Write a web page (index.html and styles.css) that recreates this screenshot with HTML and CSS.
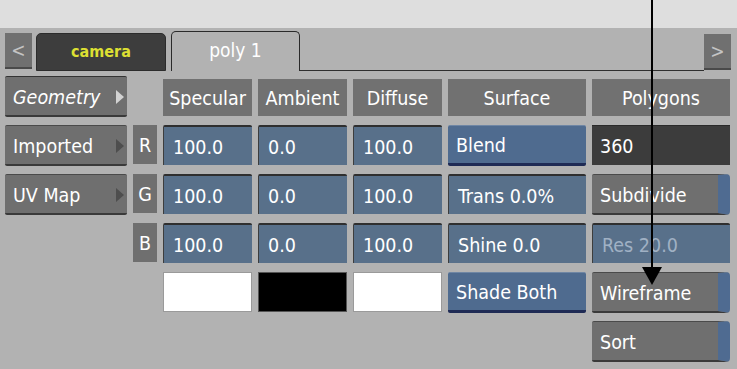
FILE: index.html
```html
<!DOCTYPE html>
<html>
<head>
<meta charset="utf-8">
<link rel="stylesheet" href="styles.css">
</head>
<body>
<div class="topband"></div>
<div class="tabbar">
  <div class="nav">&lt;</div>
  <div class="tab tab-camera">camera</div>
  <div class="tab tab-active">poly 1</div>
  <div class="tabfill"></div>
  <div class="nav nav-right">&gt;</div>
</div>
<div class="grid">
  <div class="btn btn-grey btn-active"><span class="italic">Geometry</span><span class="tri tri-light"></span></div>
  <div class="blank"></div>
  <div class="head">Specular</div>
  <div class="head">Ambient</div>
  <div class="head">Diffuse</div>
  <div class="head">Surface</div>
  <div class="head">Polygons</div>

  <div class="btn btn-grey"><span>Imported</span><span class="tri"></span></div>
  <div class="lbl">R</div>
  <div class="val">100.0</div>
  <div class="val">0.0</div>
  <div class="val">100.0</div>
  <div class="btn btn-blue">Blend</div>
  <div class="field-dark">360</div>

  <div class="btn btn-grey"><span>UV Map</span><span class="tri"></span></div>
  <div class="lbl">G</div>
  <div class="val">100.0</div>
  <div class="val">0.0</div>
  <div class="val">100.0</div>
  <div class="val">Trans 0.0%</div>
  <div class="btn btn-grey btn-toggle">Subdivide</div>

  <div class="blank"></div>
  <div class="lbl">B</div>
  <div class="val">100.0</div>
  <div class="val">0.0</div>
  <div class="val">100.0</div>
  <div class="val">Shine 0.0</div>
  <div class="val val-dim">Res 20.0</div>

  <div class="blank"></div>
  <div class="blank"></div>
  <div class="swatch swatch-white"></div>
  <div class="swatch swatch-black"></div>
  <div class="swatch swatch-white"></div>
  <div class="btn btn-blue">Shade Both</div>
  <div class="btn btn-grey btn-toggle">Wireframe</div>

  <div class="blank"></div>
  <div class="blank"></div>
  <div class="blank"></div>
  <div class="blank"></div>
  <div class="blank"></div>
  <div class="blank"></div>
  <div class="btn btn-grey btn-toggle">Sort</div>
</div>
<div class="arrow"><div class="shaft"></div><div class="arrowhead"></div></div>
</body>
</html>
```

FILE: styles.css
```css
html, body {
  margin: 0;
  padding: 0;
}
body {
  width: 737px;
  height: 369px;
  overflow: hidden;
  background: #b2b2b2;
  font-family: "DejaVu Sans Condensed", "DejaVu Sans", sans-serif;
  font-stretch: semi-condensed;
  font-size: 19.5px;
  color: #ffffff;
  position: relative;
}
.topband {
  height: 28px;
  background: #dedede;
}
.tabbar {
  height: 43px;
  display: flex;
  align-items: flex-end;
  padding-left: 5px;
  padding-right: 6px;
  box-sizing: border-box;
}
.nav {
  width: 27px;
  height: 36px;
  margin-bottom: 2px;
  background: #707070;
  color: #c4c4c4;
  box-sizing: border-box;
  border-bottom: 2px solid #4a4a4a;
  display: flex;
  align-items: center;
  justify-content: center;
  font-size: 19px;
}
.tab {
  box-sizing: border-box;
  display: flex;
  align-items: center;
  justify-content: center;
  border-radius: 5px 5px 0 0;
}
.tab-camera {
  margin-left: 4px;
  width: 130px;
  height: 38px;
  background: #3d3d3d;
  border: 1px solid #2c2c2c;
  color: #dde033;
  font-weight: bold;
  font-size: 16px;
  padding-bottom: 2px;
}
.tab-active {
  margin-left: 5px;
  width: 129px;
  height: 40px;
  background: #b2b2b2;
  border: 1px solid #2a2a2a;
  border-bottom: none;
  color: #ffffff;
  font-size: 19px;
  padding-bottom: 4px;
}
.tabfill {
  flex: 1;
  height: 1px;
  background: #2f2f2f;
}
.nav-right {
  margin-bottom: 1px;
}
.grid {
  display: grid;
  grid-template-columns: 122px 24px 89px 89px 89px 138px 138px;
  grid-auto-rows: 41px;
  column-gap: 6px;
  row-gap: 8px;
  padding: 5px 0 0 5px;
}
.btn {
  box-sizing: border-box;
  display: flex;
  align-items: center;
  padding-left: 8px;
  padding-top: 2px;
  border-radius: 2px;
}
.btn-grey {
  background: #6f6f6f;
  border-top: 1px solid #4a4a4a;
  border-bottom: 2px solid #3a3a3a;
}
.btn-active {
  border-top: 1px solid #333333;
}
.btn-grey .tri {
  margin-left: auto;
  margin-right: 3px;
  width: 0;
  height: 0;
  border-top: 7px solid transparent;
  border-bottom: 7px solid transparent;
  border-left: 8px solid #4e4e4e;
}
.btn-grey .tri-light {
  border-left-color: #d2d2d2;
}
.italic {
  font-style: italic;
}
.btn-blue {
  background: #4f6b8f;
  border-top: 1px solid #6f86a4;
  border-bottom: 3px solid #1f2b55;
}
.btn-toggle {
  border-right: 12px solid #4f6b91;
  border-radius: 2px 4px 4px 2px;
}
.head {
  box-sizing: border-box;
  margin: 3px 0 1px 0;
  padding-top: 1px;
  background: #717171;
  display: flex;
  align-items: center;
  justify-content: center;
}
.lbl {
  background: #6f6f6f;
  display: flex;
  align-items: center;
  justify-content: center;
  margin-bottom: 2px;
  padding-top: 1px;
}
.val {
  box-sizing: border-box;
  background: #58708a;
  border-top: 2px solid #2f2f2f;
  border-left: 1px solid #3d3d3d;
  display: flex;
  align-items: center;
  padding-left: 9px;
  padding-top: 2px;
  margin-bottom: 1px;
  border-radius: 2px 2px 0 0;
}
.val-dim {
  color: #a0b1c4;
}
.field-dark {
  box-sizing: border-box;
  background: #3c3c3c;
  border-top: 1px solid #2a2a2a;
  display: flex;
  align-items: center;
  padding-left: 8px;
  padding-top: 2px;
  margin-bottom: 1px;
}
.swatch {
  box-sizing: border-box;
  border: 1px solid #9a9a9a;
  margin-bottom: 1px;
}
.swatch-white {
  background: #ffffff;
}
.swatch-black {
  background: #000000;
  border-color: #555555;
}
.arrow {
  position: absolute;
  left: 642px;
  top: 0;
  width: 20px;
  display: flex;
  flex-direction: column;
  align-items: center;
}
.shaft {
  width: 2px;
  height: 267px;
  background: #000000;
}
.arrowhead {
  width: 0;
  height: 0;
  border-left: 10px solid transparent;
  border-right: 10px solid transparent;
  border-top: 18px solid #000000;
}
```
